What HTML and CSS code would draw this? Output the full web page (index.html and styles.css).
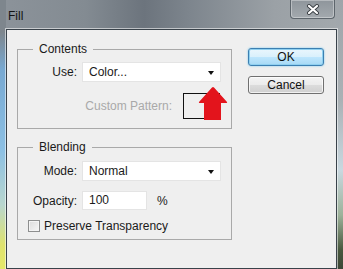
FILE: index.html
```html
<!DOCTYPE html>
<html lang="en">
<head>
    <meta charset="UTF-8">
    <title>Fill</title>
    <link rel="stylesheet" href="styles.css">
</head>
<body>
    <div class="window">
        <div class="titlebar">
            <span class="title">Fill</span>
            <div class="close">
                <svg width="14" height="11" viewBox="0 0 14 11">
                    <path d="M3 2 L11 9 M11 2 L3 9" stroke="#3a3f44" stroke-width="4" stroke-linecap="round"/>
                    <path d="M3 2 L11 9 M11 2 L3 9" stroke="#ffffff" stroke-width="2.2" stroke-linecap="round"/>
                </svg>
            </div>
        </div>

        <div class="client">
            <div class="groups">
                <fieldset class="group group-contents">
                    <legend>Contents</legend>
                    <div class="rows">
                        <label class="lbl">Use:</label>
                        <div class="select">Color...<span class="caret"></span></div>

                        <div class="pattern-row">
                            <span class="muted">Custom Pattern:</span>
                            <div class="pattern"><span class="pattern-tick"></span></div>
                        </div>
                    </div>
                </fieldset>

                <fieldset class="group group-blending">
                    <legend>Blending</legend>
                    <div class="rows">
                        <label class="lbl">Mode:</label>
                        <div class="select">Normal<span class="caret"></span></div>

                        <label class="lbl">Opacity:</label>
                        <div class="opacity-row">
                            <div class="field">100</div>
                            <span>%</span>
                        </div>
                    </div>
                    <div class="check-row">
                        <span class="checkbox"></span>
                        <span>Preserve Transparency</span>
                    </div>
                </fieldset>
            </div>

            <div class="actions">
                <button class="btn btn-default">OK</button>
                <button class="btn">Cancel</button>
            </div>
        </div>

        <!-- red annotation arrow pointing at the Use dropdown -->
        <svg class="pointer" width="32" height="36" viewBox="0 0 32 36">
            <path d="M14 1.5 Q15 0.5 16 1.5 L29 16 Q29.5 17 28.5 17 L23 17 L23 34 L6 34 L6 17 L1.5 17 Q0.5 17 1 16 Z" fill="#e3141c"/>
        </svg>
    </div>
</body>
</html>
```

FILE: styles.css
```css
body {
    margin: 0;
    padding: 0;
    font-family: "Liberation Sans", Arial, sans-serif;
    font-size: 12px;
    color: #1a1a1a;
}

.window {
    position: relative;
    width: 343px;
    height: 269px;
    box-sizing: border-box;
    display: flex;
    flex-direction: column;
    background-color: #8a9197;
    background-image:
        linear-gradient(to bottom, #7e868d 0, #7e868d 32px, #78a9d2 70px, #8cc0e4 150px, #b9d7cf 205px, #dfe36e 245px, #e6e86a 269px),
        linear-gradient(to bottom, #9fa5aa 0, #aab1b5 100px, #c9d8e0 170px, #9db29a 215px, #48583e 250px, #3c4636 269px),
        linear-gradient(to right, #e4e76a 0, #d2d86e 30%, #a2ad68 65%, #56634a 100%),
        linear-gradient(to right, #8c939a 0, #838b92 25%, #6c747d 42%, #7d858d 55%, #9ba1a6 80%, #a3a9ad 100%);
    background-size: 6px 100%, 7px 100%, 100% 5px, 100% 100%;
    background-position: left top, right top, left bottom, left top;
    background-repeat: no-repeat;
}

.titlebar {
    height: 29px;
    display: flex;
    justify-content: space-between;
    align-items: flex-start;
}

.title {
    margin: 9px 0 0 8px;
    color: #141414;
}

.close {
    width: 45px;
    height: 19px;
    margin-right: 8px;
    box-sizing: border-box;
    border: 1px solid #5d656c;
    border-top: none;
    border-radius: 0 0 4px 4px;
    box-shadow: inset 0 0 0 1px rgba(255, 255, 255, 0.35);
    background: linear-gradient(to bottom, #8e959b, #a3a9ae);
    display: flex;
    justify-content: center;
    align-items: center;
}

.client {
    flex: 1;
    margin: 0 6px;
    border: 1px solid #39424a;
    box-shadow: 0 0 0 1px rgba(255, 255, 255, 0.55);
    background-color: #efefef;
    display: flex;
    gap: 16px;
    padding: 12px 0 0 10px;
}

.group {
    width: 215px;
    box-sizing: border-box;
    margin: 0;
    border: 1px solid #a9a9a9;
    padding: 6px 9px 9px 10px;
}

.group legend {
    padding: 0 6px;
    margin-left: 5px;
    line-height: 14px;
}

.group-blending {
    margin-top: 11px;
    padding-top: 7px;
    padding-bottom: 7px;
}

.rows {
    display: grid;
    grid-template-columns: 49px 139px;
    column-gap: 5px;
    row-gap: 10px;
    align-items: center;
}

.group-contents .rows {
    row-gap: 11px;
}

.lbl {
    text-align: right;
}

.select {
    position: relative;
    height: 20px;
    box-sizing: border-box;
    background-color: #ffffff;
    border: 1px solid #e4e4e4;
    padding-left: 6px;
    line-height: 18px;
}

.caret {
    position: absolute;
    right: 6px;
    top: 8px;
    border-left: 3.5px solid transparent;
    border-right: 3.5px solid transparent;
    border-top: 4px solid #111;
}

.pattern-row {
    grid-column: 2;
    display: flex;
    justify-content: flex-end;
    align-items: center;
    gap: 11px;
    padding-right: 1px;
}

.muted {
    color: #a9a9a9;
}

.pattern {
    position: relative;
    width: 37px;
    height: 26px;
    box-sizing: border-box;
    border: 1px solid #111;
    background-color: #efefef;
}

.pattern-tick {
    position: absolute;
    left: 26px;
    bottom: 0;
    width: 1px;
    height: 6px;
    background-color: #111;
}

.opacity-row {
    display: flex;
    align-items: center;
    gap: 10px;
}

.field {
    width: 65px;
    height: 19px;
    box-sizing: border-box;
    background-color: #ffffff;
    border: 1px solid #e4e4e4;
    padding-left: 6px;
    line-height: 17px;
}

.check-row {
    display: flex;
    align-items: center;
    gap: 4px;
    margin-top: 10px;
    margin-left: 0;
    height: 12px;
}

.checkbox {
    width: 12px;
    height: 12px;
    box-sizing: border-box;
    border: 1px solid #8e8f8f;
    background: linear-gradient(135deg, #dcdcdc, #f6f6f6);
    box-shadow: inset 0 0 0 1px #f4f4f4;
}

.actions {
    display: flex;
    flex-direction: column;
    gap: 10px;
    padding-top: 6px;
}

.btn {
    width: 76px;
    height: 18px;
    padding: 0;
    font-family: inherit;
    font-size: 12px;
    color: #111;
    border: 1px solid #707070;
    border-radius: 3px;
    background: linear-gradient(to bottom, #f4f4f4 0, #ebebeb 50%, #dcdcdc 51%, #d0d0d0 100%);
    box-shadow: inset 0 0 0 1px rgba(255, 255, 255, 0.7);
}

.btn-default {
    border-color: #3c7fb1;
    background: linear-gradient(to bottom, #eaf6fd 0, #d9f0fc 50%, #bee6fd 51%, #a7d9f5 100%);
    box-shadow: inset 0 0 0 1px #8fd0f0, 0 0 2px #6cc7f0;
}

.pointer {
    position: absolute;
    left: 198px;
    top: 86px;
}
```
